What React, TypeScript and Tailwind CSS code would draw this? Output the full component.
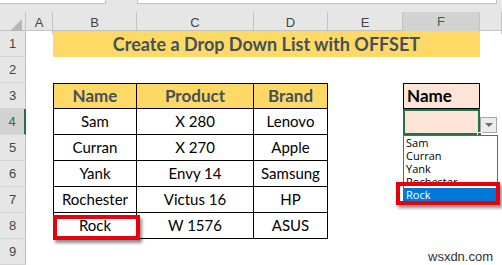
import React from "react";

const cols = "grid grid-cols-[26px_27px_84px_117px_74px_75px_77px_22px]";

const rows = [
  ["Sam", "X 280", "Lenovo"],
  ["Curran", "X 270", "Apple"],
  ["Yank", "Envy 14", "Samsung"],
  ["Rochester", "Victus 16", "HP"],
  ["Rock", "W 1576", "ASUS"],
];

export default function App() {
  const letters = ["A", "B", "C", "D", "E", "F", ""];
  return (
    <div className="relative w-[502px] h-[265px] overflow-hidden bg-white font-['Lato',sans-serif]">
      {/* formula bar strip */}
      <div className="h-[12px] bg-[#e6e6e6] flex">
        <div className="w-[106px] h-[4px] bg-white border-r border-b border-[#c3c3c3]" />
        <div className="ml-[31px] w-[360px] h-[4px] bg-white border-l border-r border-b border-[#c3c3c3]" />
      </div>
      {/* column headers */}
      <div className={`${cols} h-[19px] bg-[#e6e6e6] border-b border-[#c3c3c3] font-['Liberation_Sans',sans-serif] text-[13px] text-[#444]`}>
        <div className="relative border-r border-[#c3c3c3]">
          <div className="absolute right-[3px] bottom-[3px] w-0 h-0 border-l-[12px] border-l-transparent border-b-[12px] border-b-[#b7b7b7]" />
        </div>
        {letters.map((l, i) =>
          l === "F" ? (
            <div key={i} className="flex items-center justify-center bg-[#d2d2d2] border-r border-[#c3c3c3] border-b-2 border-b-[#217346] text-[#217346]">
              {l}
            </div>
          ) : (
            <div key={i} className="flex items-center justify-center border-r border-[#c3c3c3]">
              {l}
            </div>
          )
        )}
      </div>
      {/* body */}
      <div className={`${cols} grid-rows-[repeat(9,26px)]`}>
        {Array.from({ length: 9 }, (_, i) => (
          <div
            key={i}
            style={{ gridRow: i + 1 }}
            className={`col-start-1 flex items-center justify-center font-['Liberation_Sans',sans-serif] text-[13px] border-b border-[#d4d4d4] ${
              i === 3
                ? "bg-[#d2d2d2] text-[#217346] border-r-2 border-r-[#217346]"
                : "bg-[#e6e6e6] text-[#444] border-r border-r-[#c3c3c3]"
            }`}
          >
            {i + 1}
          </div>
        ))}
        {/* title */}
        <div className="col-start-3 col-span-5 row-start-1 bg-[#ffd966] flex items-center justify-center text-[18px] font-bold text-[#44505c]">
          Create a Drop Down List with OFFSET
        </div>
        {/* table */}
        <div className="col-start-3 col-span-3 row-start-3 row-span-6 grid grid-cols-[84px_117px_74px] grid-rows-[repeat(6,26px)] text-black">
          {["Name", "Product", "Brand"].map((h, j) => (
            <div
              key={h}
              className={`flex items-center justify-center bg-[#ffd966] font-bold text-[17px] text-[#44505c] border-t border-r border-b border-black ${j === 0 ? "border-l" : ""}`}
            >
              {h}
            </div>
          ))}
          {rows.map((r) =>
            r.map((c, j) => (
              <div
                key={c}
                className={`flex items-center justify-center text-[15px] border-r border-b border-black ${j === 0 ? "border-l" : ""}`}
              >
                {c}
              </div>
            ))
          )}
        </div>
        {/* F3 / F4 */}
        <div className="col-start-7 row-start-3 bg-[#fce4d6] border border-black flex items-center pl-[3px] font-bold text-[17px] text-black">
          Name
        </div>
        <div className="col-start-7 row-start-4 bg-[#fce4d6] border-2 border-[#217346]" />
      </div>

      {/* dropdown button */}
      <div className="absolute left-[480px] top-[117px] w-[17px] h-[16px] bg-[#ececec] border border-[#a6a6a6] flex items-center justify-center">
        <div className="w-0 h-0 border-l-[4px] border-r-[4px] border-t-[4px] border-l-transparent border-r-transparent border-t-[#6b6b6b]" />
      </div>
      {/* fill handle */}
      <div className="absolute left-[477px] top-[132px] w-[5px] h-[5px] bg-[#217346] border border-white" />

      {/* dropdown list */}
      <div className="absolute left-[403px] top-[135px] w-[95px] h-[67px] bg-white border border-[#646464] font-['Open_Sans',sans-serif] text-[11px] leading-[13px] text-black">
        {["Sam", "Curran", "Yank", "Rochester"].map((n) => (
          <div key={n} className="h-[13px] pl-[2px] overflow-hidden">
            {n}
          </div>
        ))}
        <div className="h-[13px] pl-[2px] bg-[#0078d7] text-white overflow-hidden">Rock</div>
      </div>

      {/* red highlight boxes */}
      <div className="absolute left-[53px] top-[215px] w-[87px] h-[25px] border-4 border-[#e8000b] shadow-[2px_3px_3px_rgba(0,0,0,0.45)]" />
      <div className="absolute left-[396px] top-[182px] w-[104px] h-[23px] border-4 border-[#e8000b] shadow-[2px_3px_3px_rgba(0,0,0,0.45)]" />

      {/* watermark */}
      <div className="absolute left-[428px] top-[247px] font-['Liberation_Sans',sans-serif] text-[13px] text-[#333]">
        wsxdn.com
      </div>
    </div>
  );
}
